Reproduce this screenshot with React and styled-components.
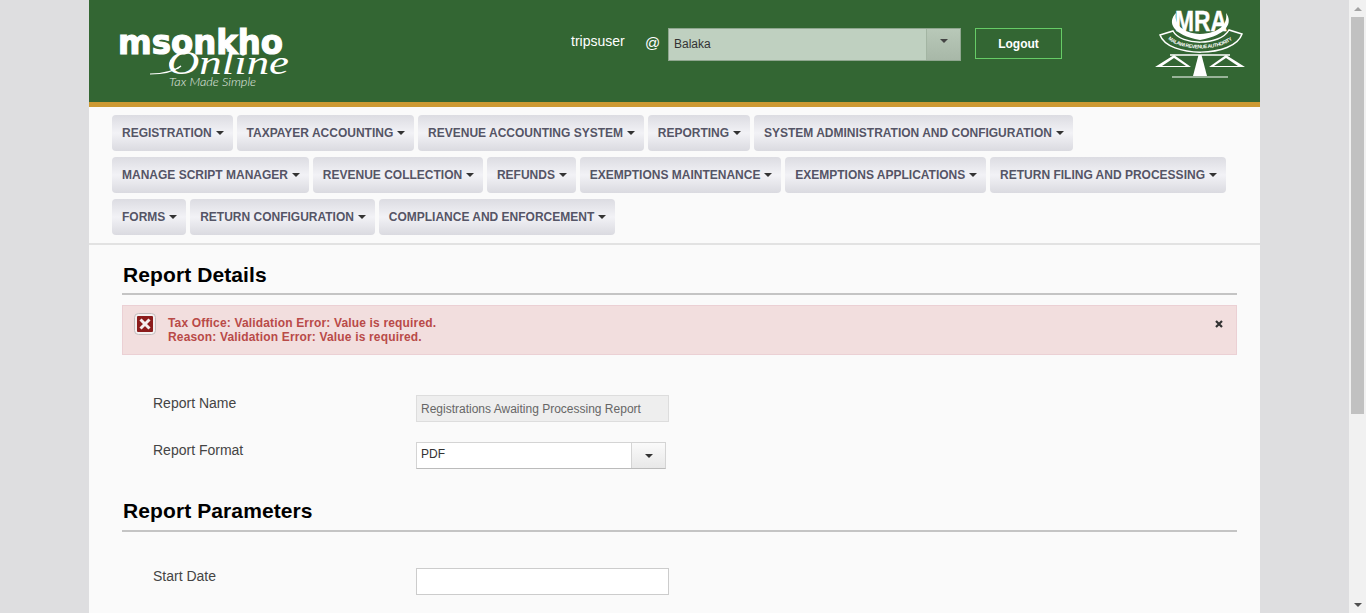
import React from 'react'
import styled, { createGlobalStyle } from 'styled-components'

const menuItems = [
  'REGISTRATION',
  'TAXPAYER ACCOUNTING',
  'REVENUE ACCOUNTING SYSTEM',
  'REPORTING',
  'SYSTEM ADMINISTRATION AND CONFIGURATION',
  'MANAGE SCRIPT MANAGER',
  'REVENUE COLLECTION',
  'REFUNDS',
  'EXEMPTIONS MAINTENANCE',
  'EXEMPTIONS APPLICATIONS',
  'RETURN FILING AND PROCESSING',
  'FORMS',
  'RETURN CONFIGURATION',
  'COMPLIANCE AND ENFORCEMENT',
]

const MsonkhoLogo = () => (
  <LogoSvg viewBox="0 0 176 70" width="176" height="70">
    <text x="3" y="32" fontFamily="'DejaVu Sans', sans-serif" fontWeight="700" fontSize="34" fill="#fff" stroke="#fff" strokeWidth="1.2" textLength="165" lengthAdjust="spacingAndGlyphs">msonkho</text>
    <text x="52" y="52" fontFamily="'Liberation Serif', serif" fontStyle="italic" fontSize="34" fill="#fff" textLength="122" lengthAdjust="spacingAndGlyphs">Online</text>
    <path d="M35 52 C46 52 58 50 66 44 C60 50 52 46 56 38" fill="none" stroke="#fff" strokeWidth="1.1" />
    <text x="54" y="64" fontFamily="Lato, sans-serif" fontStyle="italic" fontWeight="300" fontSize="11" fill="#e4ece4" textLength="87" lengthAdjust="spacingAndGlyphs">Tax Made Simple</text>
  </LogoSvg>
)

const MraLogo = () => (
  <svg viewBox="0 -6 92 76" width="92" height="76">
    <path d="M22 5 C13 14 18 27 46 32 C74 27 79 14 72 5 C74 16 66 25 46 26 C28 25 20 16 22 5 Z" fill="#fff" />
    <text x="21" y="23" fontFamily="'Liberation Sans', sans-serif" fontWeight="700" fontSize="29" fill="#fff" stroke="#fff" strokeWidth="0.4" textLength="52" lengthAdjust="spacingAndGlyphs">MRA</text>
    <path d="M6 27 L19 23 C27 38 66 38 75 22 L88 26 C80 50 14 50 6 27 Z" fill="none" stroke="#fff" strokeWidth="1.5" />
    <path id="mraArc" d="M13 30 C26 44 68 44 81 29" fill="none" />
    <text fontFamily="'Liberation Sans', sans-serif" fontWeight="700" fontSize="5" fill="#fff">
      <textPath href="#mraArc" startOffset="2%" textLength="68">MALAWI REVENUE AUTHORITY</textPath>
    </text>
    <path d="M16 47 H76" stroke="#fff" strokeWidth="1.5" />
    <path d="M20 47 L1 59 H37 Z M20 50 L8 58 H32 Z" fill="#fff" fillRule="evenodd" />
    <path d="M72 47 L55 59 H91 Z M72 50 L60 58 H84 Z" fill="#fff" fillRule="evenodd" />
    <path d="M44.5 47 H47.5 L53 68 H39 Z" fill="#fff" />
    <path d="M18 69 H74" stroke="#fff" strokeWidth="1.2" />
  </svg>
)

const ErrorIcon = () => (
  <svg viewBox="0 0 22 22" width="22" height="22">
    <rect x="0.5" y="0.5" width="21" height="21" rx="4" fill="#f4f0f0" stroke="#c4bcbc" />
    <rect x="3" y="3" width="16" height="16" rx="1" fill="#8c1c1c" />
    <path d="M6.5 6.5 L15.5 15.5 M15.5 6.5 L6.5 15.5" stroke="#f4f0f0" strokeWidth="3" />
  </svg>
)

const CloseIcon = () => (
  <svg viewBox="0 0 8 8" width="8" height="8">
    <path d="M1 1 L7 7 M7 1 L1 7" stroke="#333" strokeWidth="2.2" />
  </svg>
)

const App = () => (
  <Viewport>
    <GlobalStyle />
    <Page>
      <Container>
        <Header>
          <MsonkhoLogo />
          <UserArea>
            <UserName>tripsuser</UserName>
            <AtSign>@</AtSign>
            <OfficeSelect>
              <OfficeValue>Balaka</OfficeValue>
              <OfficeArrow><Caret color="#444" /></OfficeArrow>
            </OfficeSelect>
            <LogoutButton>Logout</LogoutButton>
          </UserArea>
          <MraWrap><MraLogo /></MraWrap>
        </Header>
        <Menu>
          {menuItems.map(item => (
            <MenuButton key={item}>{item}<Caret color="#333" /></MenuButton>
          ))}
        </Menu>
        <Content>
          <SectionTitle>Report Details</SectionTitle>
          <Alert>
            <ErrorIcon />
            <AlertText>
              <div>Tax Office: Validation Error: Value is required.</div>
              <div>Reason: Validation Error: Value is required.</div>
            </AlertText>
            <CloseWrap><CloseIcon /></CloseWrap>
          </Alert>
          <Fields>
            <Row>
              <Label>Report Name</Label>
              <ReadOnlyInput>Registrations Awaiting Processing Report</ReadOnlyInput>
            </Row>
            <Row>
              <Label>Report Format</Label>
              <FormatSelect>
                <FormatValue>PDF</FormatValue>
                <FormatArrow><Caret color="#333" /></FormatArrow>
              </FormatSelect>
            </Row>
          </Fields>
          <SectionTitle second>Report Parameters</SectionTitle>
          <Fields third>
            <Row>
              <Label>Start Date</Label>
              <TextInput />
            </Row>
          </Fields>
        </Content>
      </Container>
    </Page>
    <Scrollbar>
      <ScrollButton><Triangle color="#a3a3a3" up /></ScrollButton>
      <ScrollTrack><ScrollThumb /></ScrollTrack>
      <ScrollButton><Triangle color="#505050" /></ScrollButton>
    </Scrollbar>
  </Viewport>
)

const GlobalStyle = createGlobalStyle`
  html, body {
    margin: 0;
    height: 100%;
    overflow: hidden;
  }

  body {
    font-family: "Liberation Sans", Arial, sans-serif;
    background: #dedee0;
  }
`

const Viewport = styled.div`
  display: flex;
  height: 613px;
`

const Page = styled.div`
  flex: 1;
  display: flex;
  justify-content: center;
  overflow: hidden;
`

const Container = styled.div`
  width: 1171px;
  background: #fafafa;
`

const Header = styled.header`
  display: flex;
  box-sizing: border-box;
  height: 107px;
  padding: 22px 14px 0 26px;
  background: #336633;
  border-bottom: 5px solid #cc9933;
`

const LogoSvg = styled.svg`
  flex: none;
`

const UserArea = styled.div`
  display: flex;
  align-items: flex-start;
  margin: 6px 0 0 280px;
`

const UserName = styled.span`
  width: 74px;
  margin-top: 5px;
  font-size: 14px;
  line-height: 16px;
  color: #fff;
`

const AtSign = styled.span`
  width: 23px;
  margin-top: 6px;
  font-size: 15px;
  line-height: 17px;
  color: #fff;
`

const OfficeSelect = styled.div`
  display: flex;
  box-sizing: border-box;
  width: 293px;
  height: 33px;
  background: #bfd0c0;
  border: 1px solid #8fa68f;
`

const OfficeValue = styled.span`
  flex: 1;
  padding-left: 5px;
  font-size: 12px;
  line-height: 30px;
  color: #333;
`

const OfficeArrow = styled.span`
  display: flex;
  justify-content: center;
  box-sizing: border-box;
  width: 34px;
  padding-top: 10px;
  background: linear-gradient(#b8c8b8, #a8b8a8);
  border-left: 1px solid #a3b5a3;
`

const LogoutButton = styled.button`
  box-sizing: border-box;
  width: 87px;
  height: 31px;
  margin-left: 14px;
  padding: 0;
  background: transparent;
  border: 1px solid #66cc66;
  font-family: inherit;
  font-size: 12px;
  font-weight: 700;
  color: #fff;
`

const MraWrap = styled.div`
  margin: -20px 0 0 auto;
`

const Menu = styled.nav`
  display: flex;
  flex-wrap: wrap;
  gap: 6px 4px;
  padding: 8px 20px 8px 23px;
  border-bottom: 2px solid #e2e2e2;
`

const MenuButton = styled.button`
  display: flex;
  align-items: center;
  gap: 4px;
  box-sizing: border-box;
  height: 36px;
  padding: 0 8.8px 0 10px;
  background: linear-gradient(#dcdce2, #f2f2f6 50%, #dadae0);
  border: 0;
  border-radius: 4px;
  font-family: inherit;
  font-size: 12px;
  font-weight: 700;
  color: #555566;
`

const Caret = styled.span`
  width: 0;
  height: 0;
  border-top: 4px solid ${props => props.color};
  border-left: 4px solid transparent;
  border-right: 4px solid transparent;
`

const Content = styled.main`
  padding: 18px 23px 0 33px;
`

const SectionTitle = styled.h2`
  margin: ${props => (props.second ? '30px' : '0')} 0 0;
  padding: 0 0 ${props => (props.second ? '7px' : '6px')} 1px;
  border-bottom: 2px solid #c4c4c4;
  font-size: 21px;
  line-height: 24px;
  font-weight: 700;
  letter-spacing: 0.1px;
  color: #000;
`

const Alert = styled.div`
  display: flex;
  box-sizing: border-box;
  height: 50px;
  margin-top: 10px;
  padding: 7px 13px 0 11px;
  background: #f2dede;
  border: 1px solid #ebd0d4;
`

const AlertText = styled.div`
  flex: 1;
  margin: 3px 0 0 12px;
  font-size: 12px;
  line-height: 14px;
  font-weight: 700;
  letter-spacing: 0.16px;
  color: #b94a48;
`

const CloseWrap = styled.span`
  display: flex;
  margin-top: 7px;
`

const Fields = styled.div`
  display: flex;
  flex-direction: column;
  gap: 20px;
  padding: ${props => (props.third ? '36px' : '40px')} 0 0 31px;
`

const Row = styled.div`
  display: flex;
  align-items: flex-start;
`

const Label = styled.label`
  width: 263px;
  font-size: 14px;
  line-height: 16px;
  color: #444;
`

const ReadOnlyInput = styled.div`
  box-sizing: border-box;
  width: 253px;
  height: 27px;
  padding: 1px 0 0 4px;
  background: #eeeeee;
  border: 1px solid #dddddd;
  font-size: 12px;
  line-height: 24px;
  color: #666;
`

const FormatSelect = styled.div`
  display: flex;
  box-sizing: border-box;
  width: 250px;
  height: 27px;
  background: #fff;
  border: 1px solid #d4d4d4;
  border-bottom-color: #bbb;
`

const FormatValue = styled.span`
  flex: 1;
  padding-left: 4px;
  font-size: 12px;
  line-height: 22px;
  color: #333;
`

const FormatArrow = styled.span`
  display: flex;
  align-items: center;
  justify-content: center;
  box-sizing: border-box;
  width: 34px;
  background: linear-gradient(#fafafa, #e8e8e8);
  border-left: 1px solid #d4d4d4;
`

const TextInput = styled.div`
  box-sizing: border-box;
  width: 253px;
  height: 27px;
  background: #fff;
  border: 1px solid #ccc;
`

const Scrollbar = styled.div`
  display: flex;
  flex-direction: column;
  width: 17px;
  background: #f1f1f1;
`

const ScrollButton = styled.div`
  display: flex;
  align-items: center;
  justify-content: center;
  height: 17px;
`

const Triangle = styled.span`
  width: 0;
  height: 0;
  border-left: 4px solid transparent;
  border-right: 4px solid transparent;
  ${props => (props.up ? 'border-bottom' : 'border-top')}: 4px solid ${props => props.color};
`

const ScrollTrack = styled.div`
  flex: 1;
  padding: 0 2px;
`

const ScrollThumb = styled.div`
  height: 397px;
  background: #c1c1c1;
`

export default App
